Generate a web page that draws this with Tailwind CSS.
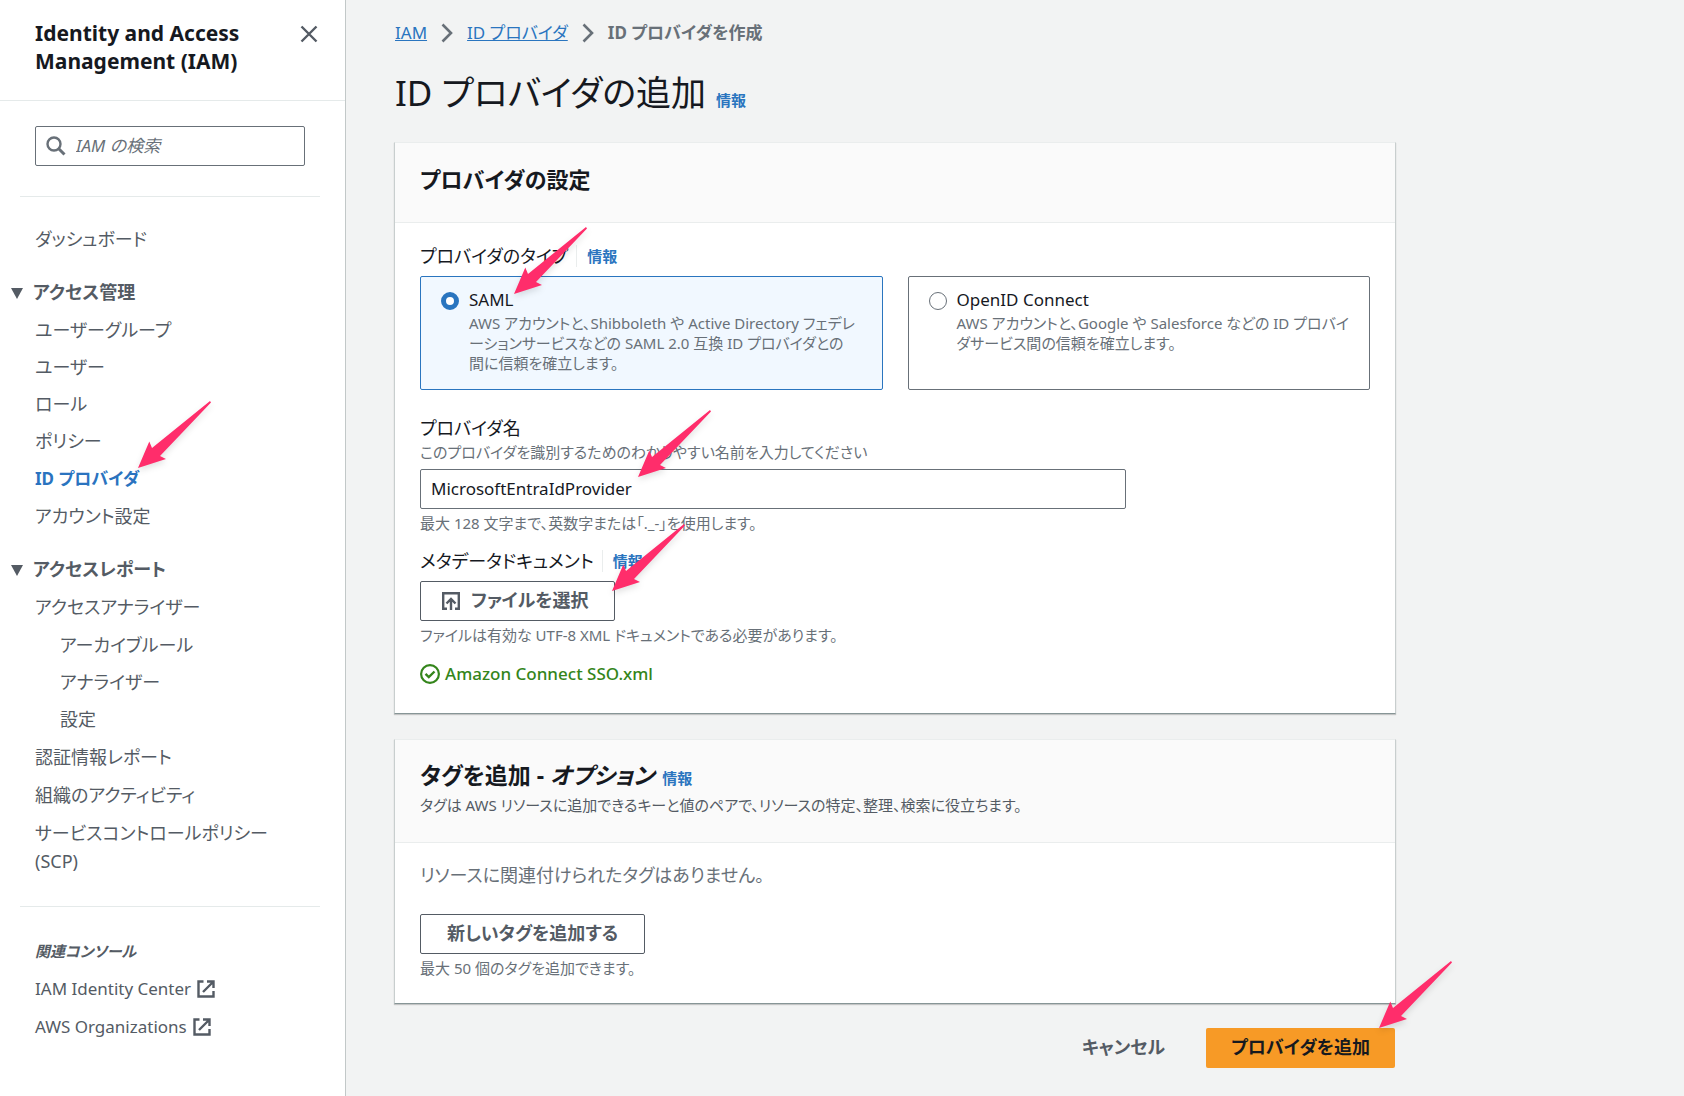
<!DOCTYPE html>
<html lang="ja">
<head>
<meta charset="utf-8">
<meta name="viewport" content="width=device-width, initial-scale=1">
<title>ID プロバイダを作成 | IAM</title>
<script src="https://cdn.jsdelivr.net/npm/@tailwindcss/browser@4"></script>
</head>
<body class="relative bg-[#f2f3f3] text-[#16191f] text-[17px] leading-7 font-['Noto_Sans','Noto_Sans_CJK_JP',sans-serif] [font-feature-settings:'palt']">
<svg class="hidden">
  <symbol id="external" viewBox="0 0 20 20"><path d="M7.500 2.500h-5v15h15V12M11 2.500h6.500V9M16.500 3.500 7 13" fill="none" stroke="currentColor" stroke-width="2.400"/></symbol>
  <symbol id="chevron" viewBox="0 0 12 20"><path d="m1.500 1.500 8.500 8.500-8.500 8.500" fill="none" stroke="currentColor" stroke-width="2.600"/></symbol>
  <symbol id="arrow" viewBox="0 0 73 67"><path d="M0 67 11.300 40.500 14 47 72 0 73 1.500 22 55 28 58Z" fill="#ff2d6b"/></symbol>
</svg>
<div class="flex min-h-screen">
  <aside class="w-[346px] shrink-0 bg-white border-r border-[#c2c8c8] text-[#545b64]">
    <header class="flex justify-between items-start h-[101px] pl-[35px] pr-[27px] pt-[19px] border-b border-[#e5eaea]">
      <h2 class="w-[230px] text-[21px] leading-7 font-bold text-[#16191f]">Identity and Access Management (IAM)</h2>
      <button type="button" aria-label="閉じる" class="mt-[6px]"><svg class="size-[18px]" viewBox="0 0 18 18"><path d="M1.500 1.500l15 15M16.500 1.500l-15 15" stroke="#545b64" stroke-width="2.400" fill="none"/></svg></button>
    </header>
    <div class="pl-[35px] pr-10 pt-[25px] pb-[30px]">
      <label class="flex items-center gap-[10px] h-10 px-[10px] border border-[#687078] rounded-[2px]">
        <svg class="size-5 shrink-0" viewBox="0 0 20 20" fill="none" stroke="#687078"><circle cx="8" cy="8" r="6.500" stroke-width="2.400"/><path d="m12.500 12.500 6 6" stroke-width="3"/></svg>
        <input type="search" aria-label="IAM の検索" placeholder="IAM の検索" class="min-w-0 flex-1 italic outline-none placeholder:text-[#687078]">
      </label>
    </div>
    <hr class="ml-5 mr-[25px] border-[#e5eaea]">
    <nav aria-label="IAM" class="pl-[35px] pr-10 pt-[28px] pb-[31px] text-lg leading-7">
      <a href="#" class="block">ダッシュボード</a>
      <details open class="mt-[25px]">
        <summary class="flex items-center gap-[10px] -ml-6 h-7 font-bold list-none"><svg class="w-3 h-[11px] mt-[2px]" viewBox="0 0 12 11"><path d="M0 0h12L6 11Z" fill="#545b64"/></svg>アクセス管理</summary>
        <ul class="flex flex-col gap-[9px] mt-[10px] leading-7">
          <li><a href="#">ユーザーグループ</a></li>
          <li><a href="#">ユーザー</a></li>
          <li><a href="#">ロール</a></li>
          <li><a href="#">ポリシー</a></li>
          <li><a href="#" aria-current="page" class="text-[17px] font-bold text-[#2a73bf]">ID プロバイダ</a></li>
          <li><a href="#">アカウント設定</a></li>
        </ul>
      </details>
      <details open class="mt-[25px]">
        <summary class="flex items-center gap-[10px] -ml-6 h-7 font-bold list-none"><svg class="w-3 h-[11px] mt-[2px]" viewBox="0 0 12 11"><path d="M0 0h12L6 11Z" fill="#545b64"/></svg>アクセスレポート</summary>
        <ul class="flex flex-col gap-[10px] mt-[10px] leading-7">
          <li><a href="#">アクセスアナライザー</a>
            <ul class="flex flex-col gap-[9px] mt-[10px] pl-[25px]">
              <li><a href="#">アーカイブルール</a></li>
              <li><a href="#">アナライザー</a></li>
              <li><a href="#">設定</a></li>
            </ul>
          </li>
          <li><a href="#">認証情報レポート</a></li>
          <li><a href="#">組織のアクティビティ</a></li>
          <li><a href="#">サービスコントロールポリシー (SCP)</a></li>
        </ul>
      </details>
    </nav>
    <hr class="ml-5 mr-[25px] border-[#e5eaea]">
    <div class="flex flex-col gap-[10px] pl-[35px] pt-[30px]">
      <h3 class="text-[15px] leading-7 font-bold italic">関連コンソール</h3>
      <a href="#" class="flex items-center gap-[5px]">IAM Identity Center <svg class="size-5"><use href="#external"/></svg></a>
      <a href="#" class="flex items-center gap-[5px]">AWS Organizations <svg class="size-5"><use href="#external"/></svg></a>
    </div>
  </aside>

  <main class="flex-1 min-w-0 max-w-[1098px] px-12 pt-[19px] pb-7">
    <nav aria-label="パンくずリスト" class="flex items-center gap-[14px] h-7 pl-px text-[#687078]">
      <a href="#" class="text-[#2a75bf] underline">IAM</a>
      <svg class="w-3 h-5"><use href="#chevron"/></svg>
      <a href="#" class="text-[#2a75bf] underline">ID プロバイダ</a>
      <svg class="w-3 h-5"><use href="#chevron"/></svg>
      <span class="font-bold">ID プロバイダを作成</span>
    </nav>
    <div class="flex items-baseline gap-[10px] mt-[22px] pl-px">
      <h1 class="text-[35px] leading-[48px]">ID プロバイダの追加</h1>
      <a href="#" class="text-[15px] font-bold text-[#2a75bf]">情報</a>
    </div>

    <form>
      <section class="mt-[25px] bg-white border border-t-[#eaeded] border-x-[#c8cece] border-b-[#879596] shadow-[0_1px_1px_#00000030]">
        <header class="h-20 px-[25px] pt-[22px] bg-[#fafafa] border-b border-[#eaeded]">
          <h2 class="text-[22px] leading-7 font-bold">プロバイダの設定</h2>
        </header>
        <div class="px-[25px] pt-[19px] pb-[25px]">
          <fieldset>
            <legend class="flex items-center h-7"><span class="text-lg leading-7">プロバイダのタイプ</span><a href="#" class="ml-2 pl-[10px] border-l border-[#eaeded] h-[22px] leading-[22px] text-[15px] font-bold text-[#2a75bf]">情報</a></legend>
            <div class="grid grid-cols-2 gap-[25px] mt-[6px]">
              <label class="flex gap-[10px] h-[114px] pl-5 pr-[25px] pt-[9px] bg-[#f1f8ff] border border-[#2a75bf] rounded-[2px]">
                <input type="radio" name="type" checked class="appearance-none size-[18px] shrink-0 mt-[6px] rounded-full border-[#2a75bf] border-[5px] bg-white">
                <span><span class="block leading-[27px]">SAML</span><span class="block text-[15px] leading-5 text-[#687078]">AWS アカウントと、Shibboleth や Active Directory フェデレ<wbr>ーションサービスなどの SAML 2.0 互換 ID プロバイダとの間に信頼を確立します。</span></span>
              </label>
              <label class="flex gap-[10px] h-[114px] pl-5 pr-4 pt-[9px] border border-[#687078] rounded-[2px]">
                <input type="radio" name="type" class="appearance-none size-[18px] shrink-0 mt-[6px] rounded-full border border-[#687078] bg-white">
                <span><span class="block leading-[27px]">OpenID Connect</span><span class="block text-[15px] leading-5 text-[#687078]">AWS アカウントと、Google や Salesforce などの ID プロバイダサービス間の信頼を確立します。</span></span>
              </label>
            </div>
          </fieldset>
          <div class="mt-6">
            <label for="provider" class="block text-lg leading-7">プロバイダ名</label>
            <p class="text-[15px] leading-5 text-[#687078]">このプロバイダを識別するためのわかりやすい名前を入力してください</p>
            <input id="provider" type="text" value="MicrosoftEntraIdProvider" class="block w-full max-w-[706px] h-10 mt-[7px] px-[10px] pb-[2px] bg-white border border-[#687078] rounded-[2px]">
            <p class="mt-1 text-[15px] leading-5 text-[#687078]">最大 128 文字まで、英数字または「._-」を使用します。</p>
          </div>
          <div class="mt-[14px]">
            <div class="flex items-center h-7"><span class="text-lg leading-7">メタデータドキュメント</span><a href="#" class="ml-2 pl-[10px] border-l border-[#eaeded] h-[22px] leading-[22px] text-[15px] font-bold text-[#2a75bf]">情報</a></div>
            <button type="button" class="flex items-center gap-[11px] h-10 mt-[6px] px-[21px] pr-[26px] pb-[2px] border border-[#545b64] rounded-[2px] text-lg leading-7 font-bold text-[#545b64]">
              <svg class="size-[18px] mt-[2px]" viewBox="0 0 18 18" fill="none" stroke="currentColor" stroke-width="2.400"><path d="M5 16.800H1.200V1.200h15.600v15.600H13M9 18V7M4.500 11.500 9 7l4.500 4.500"/></svg>
              ファイルを選択
            </button>
            <p class="mt-1 text-[15px] leading-5 text-[#687078]">ファイルは有効な UTF-8 XML ドキュメントである必要があります。</p>
            <p class="flex items-center gap-[5px] mt-[15px] font-medium text-[#34851b]">
              <svg class="size-5" viewBox="0 0 20 20" fill="none" stroke="currentColor" stroke-width="2.200"><circle cx="10" cy="10" r="8.900"/><path d="m5.500 9.800 3.300 3.200 5.700-5.500" stroke-width="2.400"/></svg>
              Amazon Connect SSO.xml
            </p>
          </div>
        </div>
      </section>

      <section class="mt-[25px] bg-white border border-t-[#eaeded] border-x-[#c8cece] border-b-[#879596] shadow-[0_1px_1px_#00000030]">
        <header class="h-[103px] px-[25px] pt-[21px] bg-[#fafafa] border-b border-[#eaeded]">
          <div class="flex items-baseline gap-2"><h2 class="text-[23px] leading-7 font-bold">タグを追加 - <i>オプション</i></h2><a href="#" class="text-[15px] leading-5 font-bold text-[#2a75bf]">情報</a></div>
          <p class="mt-[6px] text-[15px] leading-5 text-[#545b64]">タグは AWS リソースに追加できるキーと値のペアで、リソースの特定、整理、検索に役立ちます。</p>
        </header>
        <div class="px-[25px] pt-[18px] pb-[25px]">
          <p class="text-lg leading-7 text-[#687078]">リソースに関連付けられたタグはありません。</p>
          <button type="button" class="block h-10 mt-[25px] px-[26px] pb-[2px] border border-[#545b64] rounded-[2px] text-lg leading-7 font-bold text-[#545b64]">新しいタグを追加する</button>
          <p class="mt-1 text-[15px] leading-5 text-[#687078]">最大 50 個のタグを追加できます。</p>
        </div>
      </section>

      <div class="flex justify-end gap-4 mt-6 pr-px">
        <button type="button" class="h-10 px-[25px] pb-[2px] text-lg leading-7 font-bold text-[#545b64]">キャンセル</button>
        <button type="submit" class="h-10 px-[25px] pb-[2px] rounded-[2px] bg-[#f79a26] text-lg leading-7 font-bold">プロバイダを追加</button>
      </div>
    </form>
  </main>
</div>

<!-- Annotation arrows laid over the page -->
<div aria-hidden="true">
  <svg class="absolute left-[138px] top-[401px] w-[73px] h-[67px] drop-shadow-md"><use href="#arrow"/></svg>
  <svg class="absolute left-[514px] top-[227px] w-[73px] h-[67px] drop-shadow-md"><use href="#arrow"/></svg>
  <svg class="absolute left-[638px] top-[410px] w-[73px] h-[67px] drop-shadow-md"><use href="#arrow"/></svg>
  <svg class="absolute left-[612px] top-[524px] w-[73px] h-[67px] drop-shadow-md"><use href="#arrow"/></svg>
  <svg class="absolute left-[1379px] top-[961px] w-[73px] h-[67px] drop-shadow-md"><use href="#arrow"/></svg>
</div>
</body>
</html>
